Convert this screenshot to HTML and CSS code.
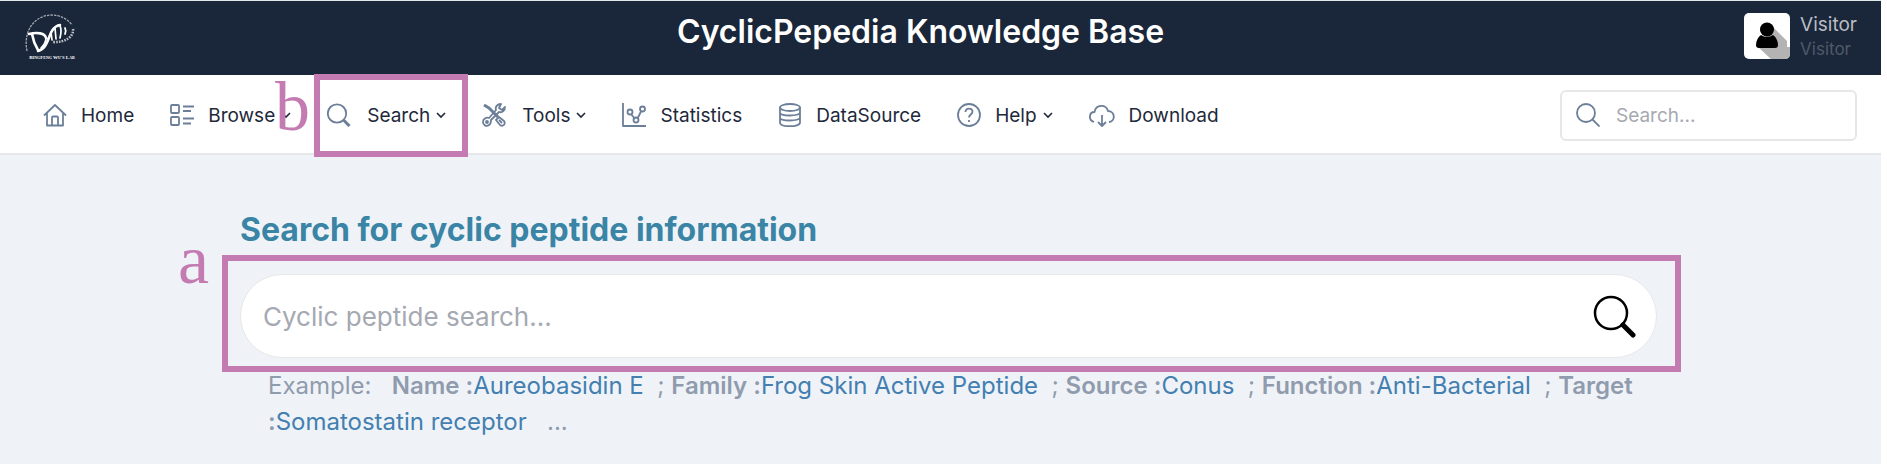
FILE: index.html
```html
<!DOCTYPE html>
<html lang="en">
<head>
<meta charset="utf-8">
<title>CyclicPepedia Knowledge Base</title>
<link rel="stylesheet" href="styles.css">
</head>
<body>
<div class="page">
  <header class="topbar">
    <a class="brand" href="#" aria-label="BingFeng Wu's Lab">
      <svg class="logo" viewBox="0 0 54 48" fill="none" stroke="#fff">
        <path d="M3 38C-1 18 10 3 27 2c9 0 17 4 21 10" stroke-width="1.3" stroke-dasharray="2.5 1" opacity=".6"/>
        <path d="M49 16c1 7-7 14-21 13" stroke-width="2.6" stroke-dasharray="1.6 1.2" opacity=".7"/>
        <path d="M5 21c8-2 16-1 17 4M8 21c1 6 3 11 6 16M14 38c13-3 9-24 22-26" stroke-width="2.600" stroke-linecap="round"/>
        <path d="M22 25c0 4-2 7-5 10M27 19l1 8M31 15l1 11M36 13c2 4 1 8 0 12M41 15c1 2 1 4 0 6" stroke-width="1.700" stroke-linecap="round"/>
        <text class="logo-text" x="28" y="46" text-anchor="middle">BingFeng Wu's Lab</text>
      </svg>
    </a>
    <h1 class="site-title">CyclicPepedia Knowledge Base</h1>
    <div class="user">
      <svg class="avatar" viewBox="0 0 46 46">
        <rect width="46" height="46" rx="5" fill="#fff"/>
        <path d="M29 14L43 28V34H46V41Q46 46 41 46H27L14 34Z" fill="#b3b3b3"/>
        <circle cx="23" cy="16.500" r="7"/>
        <path d="M17 22q6 4 12 0c3 2 5 6 5 10q0 3-3 3H15q-3 0-3-3c0-4 2-8 5-10Z"/>
      </svg>
      <div class="user-text"><span class="user-name">Visitor</span><span class="user-role">Visitor</span></div>
    </div>
  </header>
  <div class="navbar">
    <nav class="menu">
      <a class="item" href="#"><svg class="icon" viewBox="0 0 24 24"><path d="M1 12.500L12 2l11 10.500M4 10v12.500h16V10M9 22v-7.500q0-1 1-1h4q1 0 1 1V22"/></svg>Home</a>
      <a class="item" href="#"><svg class="icon" viewBox="0 0 24 24"><rect x="1" y="2" width="8" height="8" rx="1"/><rect x="1" y="14" width="8" height="8" rx="1"/><path d="M13 3.500h11M13 8h8M13 15.500h11M13 20.500h8"/></svg>Browse<svg class="chevron" viewBox="0 0 10 10"><path d="M1 3l4 4 4-4"/></svg></a>
      <a class="item marked" href="#"><svg class="icon roomy" viewBox="0 0 24 24"><circle cx="10" cy="10.500" r="9.200"/><path d="M16.500 17l6 6" stroke-width="3"/></svg>Search<svg class="chevron" viewBox="0 0 10 10"><path d="M1 3l4 4 4-4"/></svg></a>
      <a class="item" href="#"><svg class="icon roomy" viewBox="0 0 24 24"><path d="M2 2l5 3 9 9" stroke-width="3"/><path d="M23 4l-3 3-3-2 2-4c-4 0-6 3-5 6L7 15c-3-1-6 1-6 4s3 5 6 3c2-1 2-3 2-5l8-8c3 1 6-1 6-5Z"/><circle cx="5" cy="19" r="1"/><path d="M15 16l2-2 5 4c2 3-1 6-4 4l-4-5ZM17 17l3 3"/></svg>Tools<svg class="chevron" viewBox="0 0 10 10"><path d="M1 3l4 4 4-4"/></svg></a>
      <a class="item" href="#"><svg class="icon" viewBox="0 0 24 24"><path d="M1 0v23h23M9 11l4 5M15.500 15.500l4-8"/><circle cx="8" cy="9" r="2.500"/><circle cx="14" cy="17" r="2.500"/><circle cx="20.500" cy="6" r="2.500"/></svg>Statistics</a>
      <a class="item" href="#"><svg class="icon" viewBox="0 0 24 24"><ellipse cx="12" cy="4.500" rx="10" ry="3.500"/><path d="M2 4.500v15c0 5 20 5 20 0v-15M2 9.500c0 4 20 4 20 0M2 14.500c0 4 20 4 20 0"/></svg>DataSource</a>
      <a class="item" href="#"><svg class="icon" viewBox="0 0 24 24"><circle cx="12" cy="12" r="11"/><path d="M8.500 9c0-4.500 7-4.500 7-.5 0 3-3.500 3-3.500 6M12 17v2"/></svg>Help<svg class="chevron" viewBox="0 0 10 10"><path d="M1 3l4 4 4-4"/></svg></a>
      <a class="item" href="#"><svg class="icon wide" viewBox="0 0 26 24"><path d="M5 19C-1 17 0 9 5.500 9 7 1 17 1 19 8c7 0 8 10 1 11M13 12v11M9 19l4 4 4-4"/></svg>Download</a>
    </nav>
    <label class="quick"><svg class="icon roomy" viewBox="0 0 24 24"><circle cx="10" cy="10" r="9"/><path d="M16.500 16.500l7 7"/></svg><input class="quick-input" type="search" placeholder="Search..." aria-label="Search"></label>
    <span class="mark-letter letter-b">b</span>
  </div>
  <main class="content">
    <span class="mark-letter letter-a">a</span>
    <h2 class="heading">Search for cyclic peptide information</h2>
    <form class="search-frame">
      <div class="search-pill">
        <input class="search-input" type="text" placeholder="Cyclic peptide search..." aria-label="Cyclic peptide search">
        <button class="search-button" type="button" aria-label="Search"><svg viewBox="0 0 44 44" fill="none" stroke="#000" stroke-linecap="round"><circle cx="19" cy="19" r="16" stroke-width="2.500"/><path d="M31 31l10 10" stroke-width="5"/></svg></button>
      </div>
    </form>
    <p class="examples">Example: &nbsp; <b>Name :</b><a href="#">Aureobasidin E</a> &nbsp;; <b>Family :</b><a href="#">Frog Skin Active Peptide</a> &nbsp;; <b>Source :</b><a href="#">Conus</a> &nbsp;; <b>Function :</b><a href="#">Anti-Bacterial</a> &nbsp;; <b>Target</b> <b>:</b><a href="#">Somatostatin receptor</a> &nbsp; ...</p>
  </main>
</div>
</body>
</html>
```
FILE: styles.css
```css
* { box-sizing: border-box; }
body { margin: 0; background: #fff; font-family: Inter, "Liberation Sans", sans-serif; }
a { color: inherit; text-decoration: none; }
h1, h2, p { margin: 0; }
.page { margin-right: 6px; border-top: 1px solid #dfe9ea; }
.topbar { display: grid; grid-template-columns: 1fr auto 1fr; align-items: start; padding: 12px 24px 14px; background: #1a2639; }
.brand { display: block; width: 54px; }
.logo { display: block; width: 54px; height: 48px; overflow: visible; }
.logo-text { font: 700 5px "Liberation Serif", serif; font-variant: small-caps; fill: #fff; stroke: none; }
.site-title { margin-right: 40px; color: #fff; font-size: 32px; line-height: 38px; font-weight: 600; }
.user { display: flex; gap: 10px; justify-self: end; }
.avatar { width: 46px; height: 46px; }
.user-text { display: flex; flex-direction: column; }
.user-name { color: #b9bdc4; font-size: 19px; line-height: 24px; }
.user-role { color: #4f5a69; font-size: 17px; line-height: 24px; }
.navbar { position: relative; z-index: 1; display: flex; align-items: center; justify-content: space-between; height: 80px; padding: 2px 24px 0 43px; background: #fff; border-bottom: 2px solid #e6e7e9; }
.menu { display: flex; align-items: center; gap: 36px; color: #1e293b; font-size: 19px; }
.item { position: relative; display: flex; align-items: center; white-space: nowrap; }
.icon { width: 24px; height: 24px; margin-right: 14px; flex: none; fill: none; stroke: #6c7f99; stroke-width: 1.8; stroke-linejoin: round; }
.icon.wide { width: 26px; }
.icon.roomy { margin-right: 16px; }
.chevron { width: 10px; height: 10px; margin-left: 6px; fill: none; stroke: #1e293b; stroke-width: 1.6; }
.marked::after { content: ""; position: absolute; inset: -29px -22px -30px -13px; border: 6px solid #c47bb2; }
.mark-letter { position: absolute; color: #c47bb2; font: 70px/70px "Liberation Serif", serif; }
.letter-b { left: 275px; top: -3px; }
.letter-a { left: 178px; top: 70px; }
.quick { display: flex; align-items: center; width: 297px; height: 51px; padding: 0 14px; border: 2px solid #e6e7e9; border-radius: 6px; }
.quick-input { min-width: 0; flex: 1; padding: 0; border: 0; outline: 0; background: none; font: 19px Inter, sans-serif; }
.quick-input::placeholder, .search-input::placeholder { color: #a5a9b1; opacity: 1; }
.content { position: relative; padding: 55px 200px 24px 222px; background: #eff3f8; }
.heading { padding-left: 18px; color: #3a84a5; font-size: 32px; line-height: 40px; font-weight: 700; }
.search-frame { margin-top: 5px; padding: 13px 18px 8px 12px; border: 6px solid #c47bb2; }
.search-pill { display: flex; align-items: center; height: 84px; padding: 0 20px 0 22px; background: #fff; border: 1px solid #e6e7e9; border-radius: 42px; }
.search-input { flex: 1; min-width: 0; padding: 0; border: 0; outline: 0; background: none; font: 26px Inter, sans-serif; }
.search-button { width: 44px; height: 44px; padding: 0; border: 0; background: none; }
.search-button svg { display: block; }
.examples { margin-top: -4px; padding: 0 24px 0 46px; color: #909bad; font-size: 24px; line-height: 36px; }
.examples b { font-weight: 600; }
.examples a { color: #437fb0; }
```
